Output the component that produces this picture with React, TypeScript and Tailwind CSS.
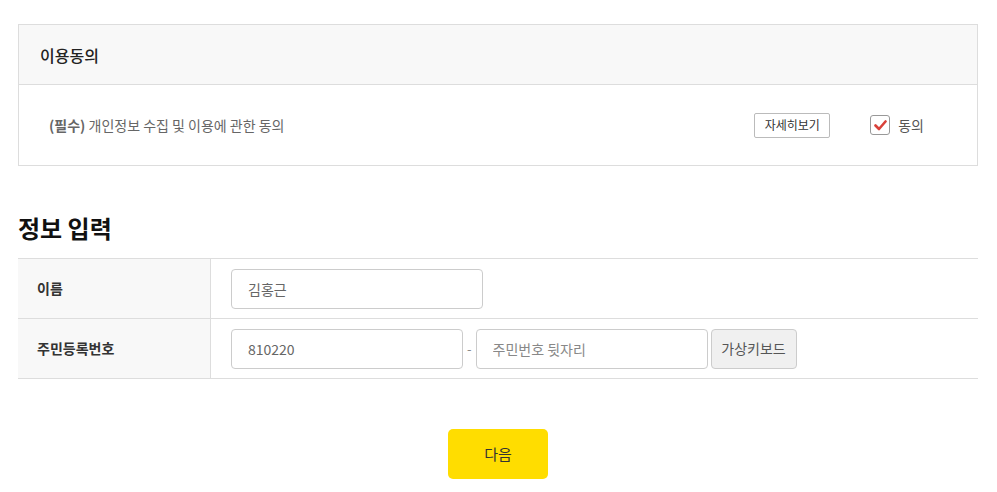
import React from 'react';

const font = { fontFamily: '"Noto Sans CJK KR", "Noto Sans", sans-serif' };

function Consent() {
  return (
    <div className="ml-[18px] mt-[24px] w-[960px] border border-[#dddddd]">
      <div className="flex h-[60px] items-center border-b border-[#dddddd] bg-[#f8f8f8] pl-[21px]">
        <h2 className="text-[16px] font-medium text-[#222]">이용동의</h2>
      </div>
      <div className="flex h-[80px] items-center pl-[30px]">
        <p className="flex-1 text-[14px] text-[#666]">
          <span className="font-bold">(필수)</span> 개인정보 수집 및 이용에 관한 동의
        </p>
        <button className="h-[25px] w-[76px] rounded-[2px] border border-[#bbbbbb] bg-white text-[12px] leading-none text-[#333]">
          자세히보기
        </button>
        <label className="ml-[40px] mr-[53px] flex items-center gap-[8px] text-[14px] text-[#555]">
          <span className="flex h-[20px] w-[20px] items-center justify-center rounded-[3px] border border-[#999] bg-white">
            <svg width="13" height="11" viewBox="0 0 13 11">
              <path d="M1.5 5.5 L5 9 L11.5 1.5" fill="none" stroke="#d9413a" strokeWidth="2.6" strokeLinecap="round" strokeLinejoin="round" />
            </svg>
          </span>
          동의
        </label>
      </div>
    </div>
  );
}

function Input({ w, value, placeholder }: { w: string; value?: string; placeholder?: string }) {
  return (
    <input
      readOnly
      defaultValue={value}
      placeholder={placeholder}
      className={`${w} h-[40px] rounded-[4px] border border-[#cccccc] px-[16px] text-[14px] text-[#666] placeholder:text-[#888] outline-none`}
      style={font}
    />
  );
}

export default function App() {
  return (
    <div className="min-h-[492px] w-[997px] bg-white" style={font}>
      <Consent />
      <h1 className="ml-[18px] mt-[45px] text-[24px] font-bold leading-[34px] text-[#111]">정보 입력</h1>
      <div className="ml-[18px] mt-[13px] w-[960px] border-t border-[#dddddd]">
        <div className="flex h-[60px] border-b border-[#dddddd]">
          <div className="flex w-[193px] items-center border-r border-[#dddddd] bg-[#f8f8f8] pl-[19px] text-[14px] font-bold text-[#333]">
            이름
          </div>
          <div className="flex items-center pl-[20px]">
            <Input w="w-[252px]" value="김홍근" />
          </div>
        </div>
        <div className="flex h-[60px] border-b border-[#dddddd]">
          <div className="flex w-[193px] items-center border-r border-[#dddddd] bg-[#f8f8f8] pl-[19px] text-[14px] font-bold text-[#333]">
            주민등록번호
          </div>
          <div className="flex items-center pl-[20px]">
            <Input w="w-[232px]" value="810220" />
            <span className="mx-[4px] text-[13px] text-[#888]">-</span>
            <Input w="w-[232px]" placeholder="주민번호 뒷자리" />
            <button className="ml-[3px] h-[40px] w-[86px] rounded-[4px] border border-[#cccccc] bg-[#f0f0f0] text-[14px] text-[#555]">
              가상키보드
            </button>
          </div>
        </div>
      </div>
      <div className="mt-[50px] flex pl-[448px]">
        <button className="h-[50px] w-[100px] rounded-[5px] bg-[#ffdd00] text-[15px] text-[#333]">다음</button>
      </div>
    </div>
  );
}
